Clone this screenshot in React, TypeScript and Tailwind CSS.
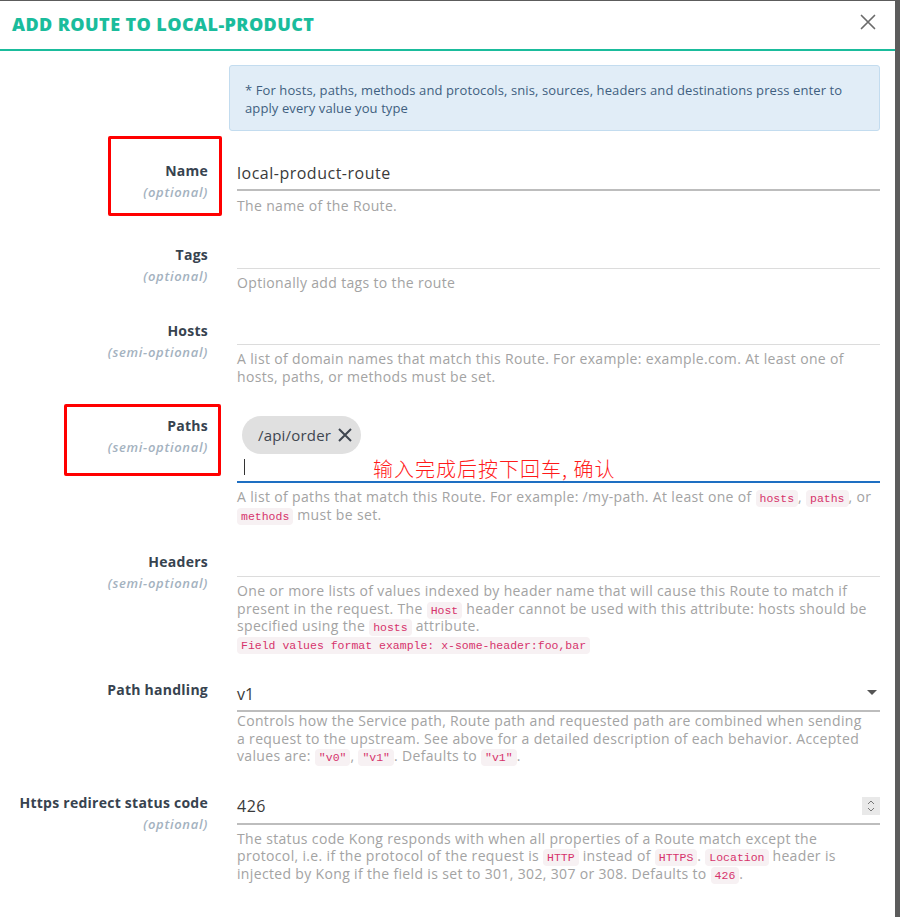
import React from 'react';

const font = { fontFamily: '"Open Sans", "Noto Sans CJK SC", sans-serif' };

const Code: React.FC<{ children: React.ReactNode }> = ({ children }) => (
  <code className="font-['Liberation_Mono','DejaVu_Sans_Mono',monospace] text-[11.5px] leading-none tracking-normal text-[#d6336c] bg-[#f7f1f3] rounded px-[4px] py-[2px]">
    {children}
  </code>
);

const Label: React.FC<{ name: string; hint?: string }> = ({ name, hint }) => (
  <div className="w-[208px] shrink-0 text-right">
    <div className="text-[14px] font-bold text-[#37434f] leading-[20px] tracking-[0.25px]">{name}</div>
    {hint && <div className="text-[13px] italic font-semibold text-[#a4b2c0] leading-[20px] mt-[1px] tracking-[0.7px]">{hint}</div>}
  </div>
);

const Help: React.FC<{ children: React.ReactNode; className?: string }> = ({ children, className = 'mt-[5px] pr-[6px]' }) => (
  <div className={`text-[14px] text-[#a3a3a3] leading-[17.5px] tracking-[0.34px] ${className}`}>{children}</div>
);

export default function App() {
  return (
    <div className="w-[900px] h-[917px] bg-[#5c5c5c] overflow-hidden" style={font}>
      <div className="w-[895px] h-[917px] mt-[1px] bg-white">
        {/* header */}
        <div className="h-[50px] border-b-2 border-[#1abc9c] flex items-center justify-between pl-[12px] pr-[19px]">
          <h3 className="text-[18px] font-extrabold text-[#1abc9c] tracking-[0.4px] mt-[-1px]">ADD ROUTE TO LOCAL-PRODUCT</h3>
          <svg width="16" height="16" viewBox="0 0 16 16" className="mt-[-7px]">
            <path d="M1.5 1.5L14.5 14.5M14.5 1.5L1.5 14.5" stroke="#6b6b6b" strokeWidth="1.7" strokeLinecap="round" />
          </svg>
        </div>

        <div className="pl-[229px] pr-[15px] pt-[14px]">
          <div className="bg-[#e1edf7] border border-[#c3dcef] rounded-[3px] h-[66px] px-[15px] pt-[15px] text-[13px] leading-[18px] tracking-[0.1px] text-[#3f5f80]">
            * For hosts, paths, methods and protocols, snis, sources, headers and destinations press enter to apply every value you type
          </div>
        </div>

        {/* Name */}
        <div className="relative flex gap-[29px] pr-[15px] mt-[25px]">
          <div className="absolute left-[108px] top-[-20px] w-[114px] h-[80px] border-[3px] border-[#ff0000] rounded-[2px]" />
          <div className="pt-[5px]"><Label name="Name" hint="(optional)" /></div>
          <div className="flex-1">
            <div className="h-[35px] border-b-2 border-[#bdbdbd] flex items-center text-[16px] text-[#3a3a3a] tracking-[0.5px]">local-product-route</div>
            <Help className="mt-[6px] pr-[6px]">The name of the Route.</Help>
          </div>
        </div>

        {/* Tags */}
        <div className="flex gap-[29px] pr-[15px] mt-[19px]">
          <div className="pt-[11px]"><Label name="Tags" hint="(optional)" /></div>
          <div className="flex-1">
            <div className="h-[35px] border-b border-[#dcdcdc]" />
            <Help>Optionally add tags to the route</Help>
          </div>
        </div>

        {/* Hosts */}
        <div className="flex gap-[29px] pr-[15px] mt-[19px]">
          <div className="pt-[11px]"><Label name="Hosts" hint="(semi-optional)" /></div>
          <div className="flex-1">
            <div className="h-[35px] border-b border-[#dcdcdc]" />
            <Help>A list of domain names that match this Route. For example: example.com. At least one of hosts, paths, or methods must be set.</Help>
          </div>
        </div>

        {/* Paths */}
        <div className="relative flex gap-[29px] pr-[15px] mt-[26px]">
          <div className="absolute left-[64px] top-[-7px] w-[157px] h-[72px] border-[3px] border-[#ff0000] rounded-[2px]" />
          <div className="pt-[5px]"><Label name="Paths" hint="(semi-optional)" /></div>
          <div className="flex-1">
            <div className="h-[72px] border-b-2 border-[#1e6fc2] relative">
              <div className="absolute left-[5px] top-[5px] h-[38px] rounded-full bg-[#e0e0e0] flex items-center pl-[16px] pr-[8px] gap-[6px] text-[15px] text-[#3f4650] tracking-[0.2px]">
                /api/order
                <svg width="16" height="16" viewBox="0 0 16 16">
                  <path d="M2 2L14 14M14 2L2 14" stroke="#3f4650" strokeWidth="2" />
                </svg>
              </div>
              <div className="absolute left-[7px] top-[48px] w-[1px] h-[16px] bg-[#333]" />
              <div className="absolute left-[136px] top-[45px] text-[20px] tracking-[1px] text-[#ff1a1a] font-['Noto_Sans_CJK_SC',sans-serif] font-light leading-[26px]">
                输入完成后按下回车, 确认
              </div>
            </div>
            <Help>
              A list of paths that match this Route. For example: /my-path. At least one of <Code>hosts</Code>, <Code>paths</Code>, or <Code>methods</Code> must be set.
            </Help>
          </div>
        </div>

        {/* Headers */}
        <div className="flex gap-[29px] pr-[15px] mt-[19px]">
          <div className="pt-[10px]"><Label name="Headers" hint="(semi-optional)" /></div>
          <div className="flex-1">
            <div className="h-[35px] border-b border-[#dcdcdc]" />
            <Help>
              One or more lists of values indexed by header name that will cause this Route to match if present in the request. The <Code>Host</Code> header cannot be used with this attribute: hosts should be specified using the <Code>hosts</Code> attribute.
              <br />
              <Code>Field values format example: x-some-header:foo,bar</Code>
            </Help>
          </div>
        </div>

        {/* Path handling */}
        <div className="flex gap-[29px] pr-[15px] mt-[25px]">
          <div className="pt-[3px]"><Label name="Path handling" /></div>
          <div className="flex-1">
            <div className="h-[35px] border-b-2 border-[#bdbdbd] flex items-start justify-between pt-[5px] text-[16px] text-[#3a3a3a]">
              <span>v1</span>
              <svg width="10" height="6" viewBox="0 0 10 6" className="mt-[8px] mr-[3px]">
                <path d="M0 0H10L5 5Z" fill="#555" />
              </svg>
            </div>
            <Help className="mt-[0px] pr-[12px]">
              Controls how the Service path, Route path and requested path are combined when sending a request to the upstream. See above for a detailed description of each behavior. Accepted values are: <Code>"v0"</Code>, <Code>"v1"</Code>. Defaults to <Code>"v1"</Code>.
            </Help>
          </div>
        </div>

        {/* Https redirect status code */}
        <div className="flex gap-[29px] pr-[15px] mt-[25px]">
          <div className="pt-[3px]"><Label name="Https redirect status code" hint="(optional)" /></div>
          <div className="flex-1">
            <div className="h-[35px] border-b-2 border-[#bdbdbd] flex items-start justify-between pt-[4px] text-[16px] text-[#3a3a3a] tracking-[0.5px]">
              <span>426</span>
              <div className="w-[18px] h-[18px] bg-[#e9e9e9] flex items-center justify-center mt-[3px]">
                <svg width="8" height="14" viewBox="0 0 8 14">
                  <path d="M1 5L4 2L7 5M1 9L4 12L7 9" stroke="#777" strokeWidth="1" fill="none" />
                </svg>
              </div>
            </div>
            <Help>
              The status code Kong responds with when all properties of a Route match except the protocol, i.e. if the protocol of the request is <Code>HTTP</Code> instead of <Code>HTTPS</Code>. <Code>Location</Code> header is injected by Kong if the field is set to 301, 302, 307 or 308. Defaults to <Code>426</Code>.
            </Help>
          </div>
        </div>
      </div>
    </div>
  );
}
